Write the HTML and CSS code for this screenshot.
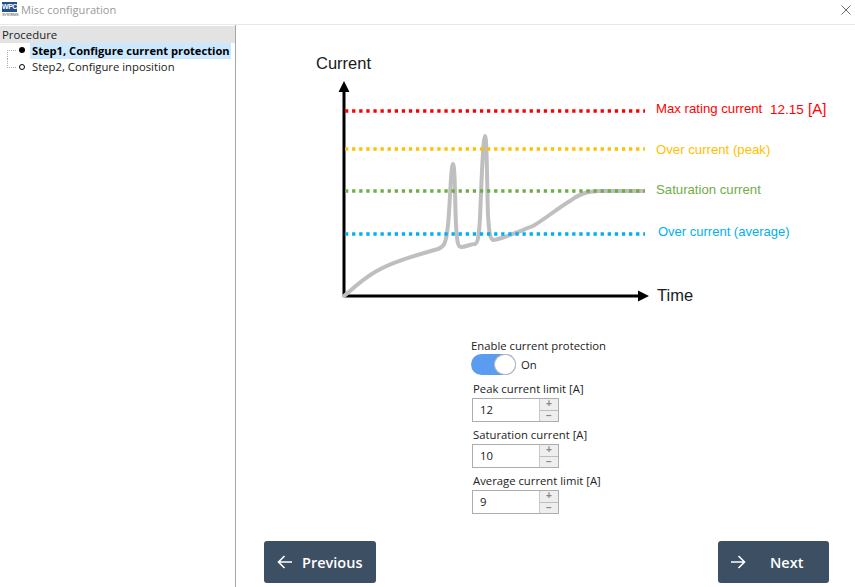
FILE: index.html
```html
<!DOCTYPE html>
<html lang="en">
<head>
<meta charset="utf-8">
<title>Misc configuration</title>
<link rel="stylesheet" href="styles.css">
</head>
<body>
<div class="window">
  <header class="titlebar">
    <div class="logo"><span class="logo-mark">WPC</span><span class="logo-sub">SYSTEMS</span></div>
    <span class="title">Misc configuration</span>
    <svg class="close" viewBox="0 0 10 10"><path d="M.5.5l9 9M9.5.5l-9 9"/></svg>
  </header>
  <div class="content">
    <aside class="sidebar">
      <div class="side-head">Procedure</div>
      <div class="tree">
        <div class="tree-row">
          <svg class="node" viewBox="0 0 30 16"><path class="link" d="M16 7.500H7.500V16"/><circle class="on" cx="22" cy="7" r="3"/></svg>
          <span class="step active">Step1, Configure current protection</span>
        </div>
        <div class="tree-row">
          <svg class="node" viewBox="0 0 30 16"><path class="link" d="M7.500 0v8.500H16"/><circle class="off" cx="22" cy="8" r="2.500"/></svg>
          <span class="step">Step2, Configure inposition</span>
        </div>
      </div>
    </aside>
    <main class="main">
      <svg class="chart" viewBox="300 40 555 270">
        <text class="axis-label" x="316" y="69">Current</text>
        <text class="axis-label" x="657" y="301">Time</text>
        <path class="axis" d="M344 296V90M344 296H640"/>
        <path class="head" d="M344 81l5.500 11h-11zM649 296l-11 5.500v-11z"/>
        <path class="curve" d="M344 296C352 289 363 279 375 272C390 263 410 257 438 249C444 247 446 244 448 225C450 205 451 164 453 164C455 164 455 205 456 225C457 242 458 247 461 247C466 247 470 244 475 244C478 243 479 235 480 218C481 195 483 136 485 136C487 136 487 190 488 215C489 232 490 239 493 240C505 238 520 231 533 226C545 219 558 208 570 201C578 195 586 191 600 191H643"/>
        <path class="dots red" d="M345 111H645"/>
        <path class="dots orange" d="M345 149H645"/>
        <path class="dots green" d="M345 191H645"/>
        <path class="dots blue" d="M345 234H645"/>
        <text class="lab red-t" x="656" y="113">Max rating current</text>
        <text class="num" x="770" y="114">12.15</text>
        <text class="val" x="808" y="114">[A]</text>
        <text class="lab orange-t" x="656" y="154">Over current (peak)</text>
        <text class="lab green-t" x="656" y="194">Saturation current</text>
        <text class="lab blue-t" x="658" y="236">Over current (average)</text>
      </svg>
      <form class="form">
        <div class="label first">Enable current protection</div>
        <div class="toggle-row">
          <span class="toggle"><span class="knob"></span></span>
          <span class="toggle-text">On</span>
        </div>
        <div class="label">Peak current limit [A]</div>
        <div class="spin"><span class="spin-val">12</span><span class="spin-btns"><span class="sb">+</span><span class="sb">−</span></span></div>
        <div class="label">Saturation current [A]</div>
        <div class="spin"><span class="spin-val">10</span><span class="spin-btns"><span class="sb">+</span><span class="sb">−</span></span></div>
        <div class="label">Average current limit [A]</div>
        <div class="spin"><span class="spin-val">9</span><span class="spin-btns"><span class="sb">+</span><span class="sb">−</span></span></div>
      </form>
      <div class="actions">
        <button type="button" class="btn prev">
          <svg class="arrow" viewBox="0 0 16 14"><path d="M15 7H1.500M7.500 1L1.500 7l6 6"/></svg>
          <span>Previous</span>
        </button>
        <button type="button" class="btn next">
          <svg class="arrow" viewBox="0 0 16 14"><path d="M1 7h13.500M8.500 1l6 6-6 6"/></svg>
          <span>Next</span>
        </button>
      </div>
    </main>
  </div>
</div>
</body>
</html>
```
FILE: styles.css
```css
* { box-sizing: border-box; }
html, body { margin: 0; height: 100%; }
body { font-family: "Open Sans", "Noto Sans", sans-serif; font-size: 11.300px; color: #1a1a1a; background: #fff; overflow: hidden; }
.window { width: 855px; height: 587px; display: flex; flex-direction: column; }
.titlebar { height: 25px; flex: none; display: flex; align-items: center; padding: 0 4px 5px 2px; border-bottom: 1px solid #e8e8e8; }
.logo { width: 15px; height: 15px; display: flex; flex-direction: column; align-items: stretch; margin-right: 4px; }
.logo-mark { height: 10px; background: #24508f; color: #fff; font: bold 7px/10px "Liberation Sans", sans-serif; text-align: center; letter-spacing: -.5px; }
.logo-sub { color: #555; font: 4px/5px "Liberation Sans", sans-serif; letter-spacing: -.4px; white-space: nowrap; }
.title { color: #9a9a9a; font-size: 11.100px; }
.close { width: 10px; height: 10px; margin-left: auto; stroke: #6b6b6b; stroke-width: 1; fill: none; }
.content { flex: 1; display: flex; min-height: 0; }
.sidebar { width: 236px; flex: none; border-right: 1px solid #a6a6a6; }
.side-head { height: 17px; margin-top: 1px; background: #e3e3e3; padding-left: 2px; line-height: 17px; font-size: 11.400px; color: #222; }
.tree-row { display: flex; height: 16px; align-items: stretch; }
.node { width: 30px; height: 16px; flex: none; }
.link { fill: none; stroke: #aaa; stroke-width: 1; stroke-dasharray: 1 1; }
.on { fill: #000; }
.off { fill: #fff; stroke: #000; stroke-width: 1; }
.step { padding: 0 2px; line-height: 16px; color: #222; white-space: nowrap; }
.step.active { background: #cce8ff; font-weight: 700; font-size: 11.150px; color: #000; height: 16px; width: 201px; }
.main { flex: 1; display: flex; flex-direction: column; min-width: 0; }
.chart { display: block; width: 555px; height: 270px; margin: 15px 0 0 64px; flex: none; }
.axis-label { font: 16.500px "Liberation Sans", sans-serif; fill: #1a1a1a; }
.dots { fill: none; stroke-width: 3.400; stroke-dasharray: 3.300 3.800; }
.red { stroke: #ff0000; }
.orange { stroke: #ffc000; }
.green { stroke: #70ad47; }
.blue { stroke: #00b0f0; }
.curve { fill: none; stroke: #bfbfbf; stroke-width: 4; stroke-linecap: round; stroke-linejoin: round; }
.axis { fill: none; stroke: #000; stroke-width: 3; }
.head { fill: #000; }
.lab { font: 13.200px "Liberation Sans", sans-serif; }
.val { font: 15px "Liberation Sans", sans-serif; fill: #ff0000; }
.num { font: 13.500px "Liberation Sans", sans-serif; fill: #ff0000; }
.red-t { fill: #ff0000; }
.orange-t { fill: #ffc000; }
.green-t { fill: #70ad47; }
.blue-t { fill: #00b0f0; font-size: 13px; }
.form { margin: 28px 0 0 235px; width: 150px; flex: none; }
.label { height: 16px; line-height: 16px; margin: 5px 0 1px 2px; white-space: nowrap; color: #222; }
.label.first { margin: 0; }
.toggle-row { display: flex; align-items: flex-start; height: 22px; gap: 5px; }
.toggle { width: 45px; height: 21px; border-radius: 11px; background: #5b9bf0; display: flex; justify-content: flex-end; }
.knob { width: 22px; height: 21px; border-radius: 50%; background: #fff; border: 1px solid #bcbcbc; }
.toggle-text { line-height: 21px; }
.spin { width: 87px; height: 24px; margin-left: 1px; border: 1px solid #adadad; display: flex; }
.spin-val { flex: 1; padding-left: 7px; line-height: 22px; }
.spin-btns { width: 19px; display: flex; flex-direction: column; border-left: 1px solid #c8c8c8; }
.sb { flex: 1; background: #eeeeee; color: #888; text-align: center; font: bold 10px/10px "Liberation Sans", sans-serif; }
.sb + .sb { border-top: 1px solid #bdbdbd; }
.actions { margin: auto 26px 4px 28px; display: flex; justify-content: space-between; }
.btn { height: 42px; border: 0; border-radius: 3px; background: #3d4f63; color: #fff; font-family: "Open Sans", sans-serif; font-size: 14.500px; font-weight: 600; display: flex; align-items: center; padding: 0; }
.prev { width: 112px; padding-left: 13px; gap: 9px; }
.next { width: 111px; padding-left: 12px; gap: 24px; }
.arrow { width: 16px; height: 14px; fill: none; stroke: #fff; stroke-width: 1.600; }
```
